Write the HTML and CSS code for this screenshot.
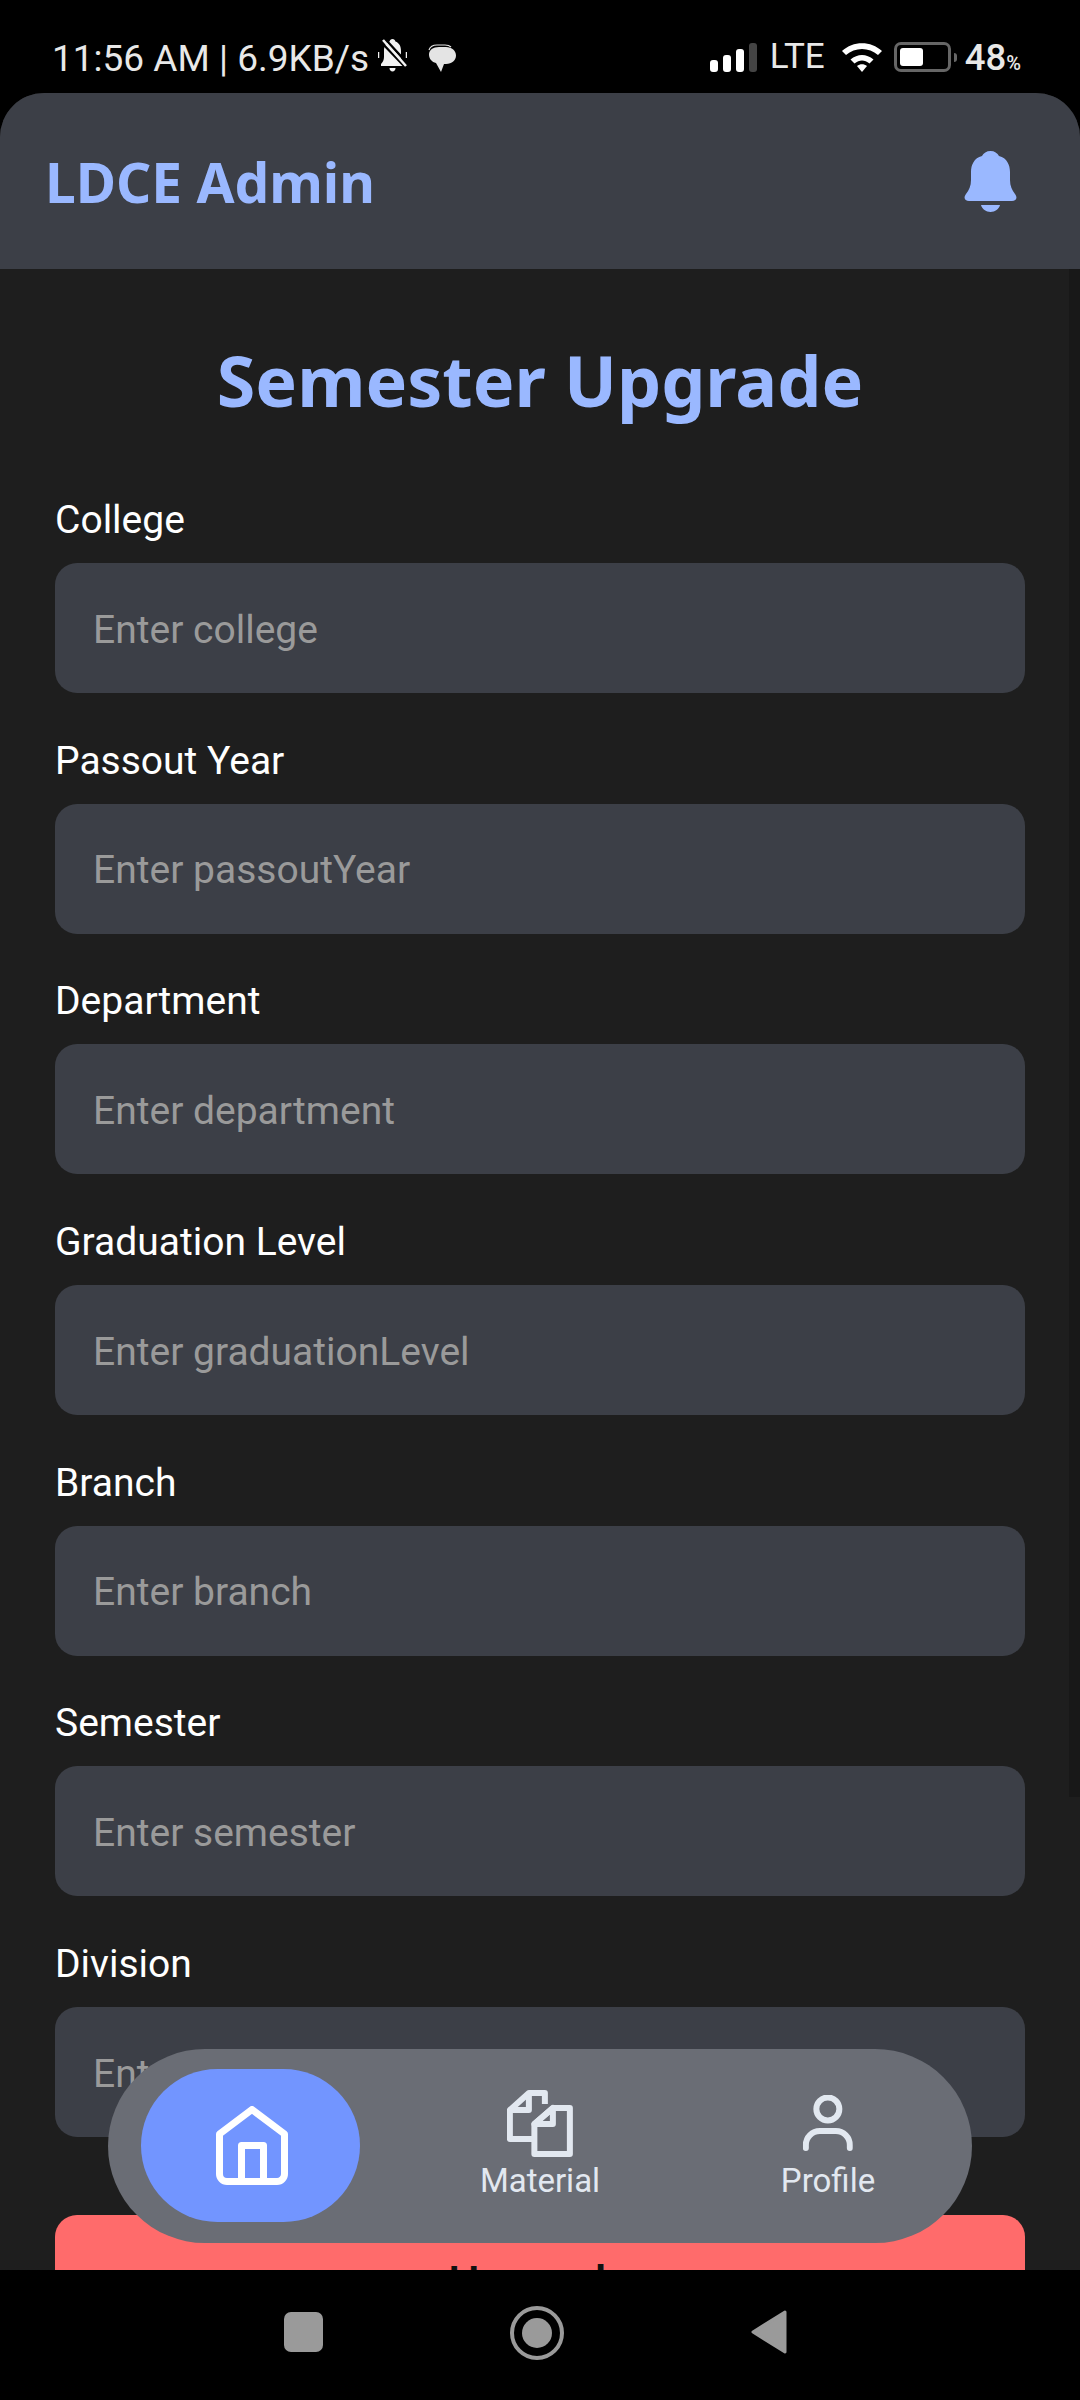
FILE: index.html
```html
<!DOCTYPE html>
<html lang="en">
<head>
<meta charset="utf-8">
<title>Semester Upgrade</title>
<link rel="stylesheet" href="styles.css">
</head>
<body>
<div class="phone">
  <div class="status">
    <div class="status-left">
      <span class="status-text">11:56 AM | 6.9KB/s</span>
      <svg class="ic-mute" viewBox="0 0 29 33"><path d="M14.5 0c-1.6 0-2.6 1-2.9 2.6C7.6 4 6 7.500 6 12v6c0 3-1.200 5-3 7v2h23v-2c-1.800-2-3-4-3-7v-6c0-4.500-1.600-8-5.600-9.400C17.100 1 16.100 0 14.500 0z" fill="#f2f2f2"/><path d="M11.500 29h6c0 2-1.300 3.500-3 3.500s-3-1.500-3-3.500z" fill="#f2f2f2"/><path d="M3 3l24 25M8 1l22 24" stroke="#000" stroke-width="2.500"/><path d="M5 1l23 26" stroke="#f2f2f2" stroke-width="2.500"/><path d="M0 13v6M29 13v6" stroke="#f2f2f2" stroke-width="2.500"/></svg>
      <svg class="ic-bubble" viewBox="0 0 28 28"><path d="M1 6c1-3 4-5 8-5h8c3 0 5 1 6 2" fill="none" stroke="#e4e4e4" stroke-width="1.200"/><path d="M11 3h7c6 0 10 4 10 8.500S24 20 18 20h-2l-3 8-5-9c-4-1-7-4-7-8.500S5 3 11 3z" fill="#e4e4e4"/></svg>
    </div>
    <div class="status-right">
      <div class="signal"><i class="b1"></i><i class="b2"></i><i class="b3"></i><i class="b4"></i></div>
      <span class="lte">LTE</span>
      <svg class="ic-wifi" viewBox="0 0 42 30"><path d="M1 9C12-1.500 30-1.500 41 9l-4 4C28 5 14 5 5 13z" fill="#fff"/><path d="M9.500 17.500c7-6 16-6 23 0l-4 4c-5-4-10-4-15 0z" fill="#fff"/><path d="M16 24c3-2.500 7-2.500 10 0l-5 6z" fill="#fff"/></svg>
      <div class="battery"><div class="battery-shell"><div class="battery-fill"></div></div><div class="battery-nub"></div></div>
      <span class="pct">48<small>%</small></span>
    </div>
  </div>

  <div class="screen">
    <header class="appbar">
      <span class="brand">LDCE Admin</span>
      <svg class="ic-bell" viewBox="0 0 53 61"><path d="M26.500 0c-4 0-7 2-8.500 5C10 7 7 14 7 21v8c0 6-2 10-5 14-3 4-1 7 3 7h43c4 0 6-3 3-7-3-4-5-8-5-14v-8c0-7-3-14-11-16-1.500-3-4.500-5-8.500-5z" fill="#9ab8ff"/><path d="M17 54h19c-1 4-5 7-9.500 7S18 58 17 54z" fill="#9ab8ff"/></svg>
    </header>
    <main class="content">
      <div class="scroll-thumb"></div>
      <h1 class="title">Semester Upgrade</h1>
      <div class="field"><div class="label">College</div><div class="input">Enter college</div></div>
      <div class="field"><div class="label">Passout Year</div><div class="input">Enter passoutYear</div></div>
      <div class="field"><div class="label">Department</div><div class="input">Enter department</div></div>
      <div class="field"><div class="label">Graduation Level</div><div class="input">Enter graduationLevel</div></div>
      <div class="field"><div class="label">Branch</div><div class="input">Enter branch</div></div>
      <div class="field"><div class="label">Semester</div><div class="input">Enter semester</div></div>
      <div class="field"><div class="label">Division</div><div class="input">Enter division</div></div>
      <div class="submit">Upgrade</div>
    </main>
    <nav class="tabbar">
      <div class="tab-home">
        <svg class="ic-home" viewBox="0 0 72 79"><path d="M36 3.500L3.500 28V68a7.500 7.500 0 0 0 7.500 7.500H61a7.500 7.500 0 0 0 7.500-7.500V28z" fill="none" stroke="#fff" stroke-width="7" stroke-linejoin="round"/><path d="M25.500 75.500V39.500H47.500V75.500" fill="none" stroke="#fff" stroke-width="7" stroke-linejoin="round"/></svg>
      </div>
      <div class="tab tab-material">
        <svg class="ic-material" viewBox="0 0 66 67"><path d="M38 14V3H22L3 20V49H27" fill="none" stroke="#e2e8f0" stroke-width="6" stroke-linejoin="round"/><path d="M22 3V20H3" fill="none" stroke="#e2e8f0" stroke-width="6" stroke-linejoin="round"/><path d="M46 18H63V64H27.500V34z" fill="none" stroke="#e2e8f0" stroke-width="6" stroke-linejoin="round"/><path d="M46 18V34H27.500z" fill="none" stroke="#e2e8f0" stroke-width="6" stroke-linejoin="round"/></svg>
        <span class="tab-label">Material</span>
      </div>
      <div class="tab tab-profile">
        <svg class="ic-profile" viewBox="0 0 50 56"><circle cx="25" cy="14" r="11.500" fill="none" stroke="#e2e8f0" stroke-width="6"/><path d="M3 53V50A14 14 0 0 1 17 36H33A14 14 0 0 1 47 50V53" fill="none" stroke="#e2e8f0" stroke-width="6" stroke-linecap="round"/></svg>
        <span class="tab-label">Profile</span>
      </div>
    </nav>
  </div>

  <div class="sysnav">
    <div class="sys-square"></div>
    <div class="sys-circle"><div class="sys-dot"></div></div>
    <svg class="sys-back" viewBox="0 0 36 44"><path d="M34 2L2 22L34 42z" fill="#9a9a9a" stroke="#9a9a9a" stroke-width="3" stroke-linejoin="round"/></svg>
  </div>
</div>
</body>
</html>
```
FILE: styles.css
```css
* { box-sizing: border-box; }
html, body { margin: 0; padding: 0; background: #000; }
.phone { width: 1080px; height: 2400px; display: flex; flex-direction: column; overflow: hidden; background: #000; font-family: Roboto, "Liberation Sans", sans-serif; }

.status { height: 93px; flex: none; display: flex; justify-content: space-between; padding: 38px 59px 0 52px; color: #e8e8e8; }
.status-left, .status-right { display: flex; align-items: flex-start; }
.status-text { font-size: 37px; line-height: 40px; margin-top: 1px; }
.ic-mute { width: 29px; height: 33px; margin: 1px 0 0 9px; }
.ic-bubble { width: 28px; height: 28px; margin: 6px 0 0 21px; }
.signal { display: flex; align-items: flex-end; gap: 5px; height: 29px; margin-top: 5px; }
.signal i { display: block; width: 8px; border-radius: 3px; background: #fff; }
.signal .b1 { height: 12px; }
.signal .b2 { height: 17px; }
.signal .b3 { height: 23px; }
.signal .b4 { height: 29px; background: #444; }
.lte { font-size: 35px; line-height: 36px; margin: 1px 0 0 13px; }
.ic-wifi { width: 42px; height: 30px; margin: 4px 0 0 16px; }
.battery { display: flex; align-items: center; margin: 4px 0 0 11px; }
.battery-shell { width: 57px; height: 30px; border: 3px solid #666; border-radius: 7px; padding: 3px; }
.battery-fill { width: 23px; height: 18px; background: #fff; border-radius: 3px; }
.battery-nub { width: 3px; height: 9px; margin-left: 3px; background: #666; border-radius: 0 3px 3px 0; }
.pct { font-size: 36.500px; line-height: 40px; font-weight: 500; margin: 0 0 0 8px; }
.pct small { font-size: 20px; }

.screen { position: relative; flex: 1; min-height: 0; display: flex; flex-direction: column; background: #1e1e1e; border-radius: 44px 44px 0 0; overflow: hidden; }
.appbar { height: 176px; flex: none; display: flex; align-items: center; justify-content: space-between; padding: 0 63px 0 45px; background: #3c3f47; }
.brand { font-family: "Noto Sans", sans-serif; font-weight: 700; font-size: 55px; color: #9ab8ff; }
.ic-bell { width: 53px; height: 61px; }

.content { position: relative; flex: 1; min-height: 0; overflow: hidden; padding: 66px 55px 0; }
.scroll-thumb { position: absolute; top: 0; right: 0; width: 11px; height: 1528px; background: #181818; }
.title { margin: 0 0 74px; text-align: center; font-family: "Noto Sans", sans-serif; font-weight: 700; font-size: 70px; line-height: 90px; color: #9ab8ff; }
.field { margin-bottom: 46.700px; }
.label { font-size: 39px; line-height: 42px; color: #fff; margin-bottom: 22px; }
.input { height: 130px; display: flex; align-items: center; padding: 3px 0 0 38px; border-radius: 22px; background: #3c3f47; color: #9a9a9a; font-size: 39px; }
.submit { height: 130px; margin-top: 78px; display: flex; align-items: center; justify-content: center; border-radius: 22px; background: #ff6b6b; color: #111; font-family: "Noto Sans", sans-serif; font-weight: 600; font-size: 44px; }

.tabbar { position: absolute; left: 108px; top: 1956px; width: 864px; height: 194px; border-radius: 97px; background: #6a6d75; }
.tab-home { position: absolute; left: 33px; top: 20px; width: 219px; height: 153px; border-radius: 76.500px; background: #7295ff; display: flex; align-items: center; justify-content: center; }
.ic-home { width: 72px; height: 79px; margin: 0 0 0 2px; }
.tab { position: absolute; top: 41px; display: flex; flex-direction: column; align-items: center; transform: translateX(-50%); }
.tab-material { left: 432px; }
.tab-profile { left: 720px; }
.tab-label { font-size: 33px; line-height: 38px; color: #e2e8f0; white-space: nowrap; }
.ic-material { width: 66px; height: 67px; display: block; margin-bottom: 5px; }
.ic-profile { width: 50px; height: 56px; display: block; margin: 5px 0 11px; }

.sysnav { position: relative; height: 130px; flex: none; background: #000; }
.sys-square { position: absolute; left: 284px; top: 42px; width: 39px; height: 40px; border-radius: 7px; background: #9a9a9a; }
.sys-circle { position: absolute; left: 510px; top: 36px; width: 54px; height: 54px; border: 4px solid #9a9a9a; border-radius: 50%; display: flex; align-items: center; justify-content: center; }
.sys-dot { width: 30px; height: 30px; border-radius: 50%; background: #9a9a9a; }
.sys-back { position: absolute; left: 751px; top: 40px; width: 36px; height: 44px; }
```
